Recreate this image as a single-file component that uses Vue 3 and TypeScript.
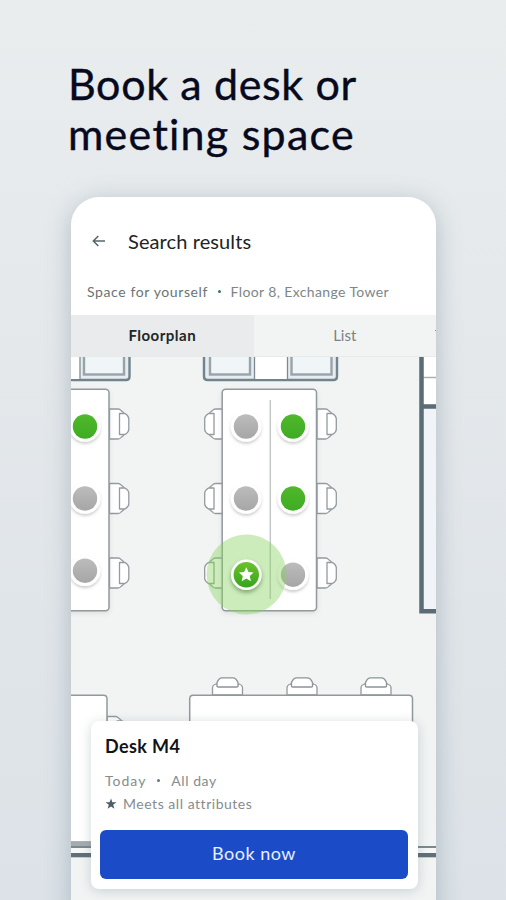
<script setup lang="ts">
interface Spot {
  x: number
  y: number
  free: boolean
}

const clusters: number[] = [-207.5, 0]
const chairRows: number[] = [424, 498.5, 573]
const topChairs: number[] = [227.5, 302, 376]

const spots: Spot[] = [
  { x: 85, y: 426.5, free: true },
  { x: 85, y: 498.5, free: false },
  { x: 85, y: 570.7, free: false },
  { x: 246, y: 426.5, free: false },
  { x: 293, y: 426.5, free: true },
  { x: 246, y: 498.5, free: false },
  { x: 293, y: 498.5, free: true },
  { x: 293, y: 574.7, free: false },
]
</script>

<template>
  <main class="page">
    <h1 class="headline">
      <span class="line line-a">Book a desk or</span>
      <span class="line line-b">meeting space</span>
    </h1>

    <section class="phone">
      <header class="top">
        <div class="title-row">
          <svg class="back" viewBox="0 0 14 12" width="14" height="12">
            <path d="M6.3 1 1.3 6l5 5M1.5 6h11.500" fill="none" stroke="#56666b" stroke-width="1.5" />
          </svg>
          <h2 class="title">Search results</h2>
        </div>
        <p class="crumbs">
          <span class="who">Space for yourself</span>
          <i class="dot"></i>
          <span class="where">Floor 8, Exchange Tower</span>
        </p>
      </header>

      <nav class="tabs">
        <button class="tab active"><span>Floorplan</span></button>
        <button class="tab"><span>List</span></button>
        <i class="next-tab"></i>
      </nav>

      <div class="floor">
        <svg class="map" viewBox="71 357 365 543" width="365" height="543">
          <defs>
            <linearGradient id="free" x1="0" y1="0" x2="0" y2="1">
              <stop offset="0" stop-color="#50b82c" />
              <stop offset="1" stop-color="#3eac22" />
            </linearGradient>
            <linearGradient id="picked" x1="0" y1="0" x2="0" y2="1">
              <stop offset="0" stop-color="#6cc22c" />
              <stop offset="1" stop-color="#35a51c" />
            </linearGradient>
            <linearGradient id="taken" x1="0" y1="0" x2="0" y2="1">
              <stop offset="0" stop-color="#bcbcbc" />
              <stop offset="1" stop-color="#a6a6a6" />
            </linearGradient>
            <filter id="lift" x="-40%" y="-40%" width="180%" height="190%">
              <feDropShadow dx="0" dy="2" stdDeviation="1.8" flood-color="#000" flood-opacity="0.2" />
            </filter>
            <filter id="picked-lift" x="-40%" y="-40%" width="180%" height="190%">
              <feDropShadow dx="0" dy="2.500" stdDeviation="2" flood-color="#123c08" flood-opacity="0.42" />
            </filter>
            <filter id="soft" x="-10%" y="-10%" width="120%" height="120%">
              <feDropShadow dx="0" dy="2" stdDeviation="2" flood-color="#4c5c60" flood-opacity="0.14" />
            </filter>
            <g id="chair">
              <path d="M0-15H8.500Q10.500-15 11.500-13.500L14-11.5V11.5L11.500 13.500Q10.500 15 8.500 15H0Z" fill="#fff" stroke="#939b9f" stroke-width="1.3" stroke-linejoin="round" />
              <path d="M10-10.5H15.5Q19.3-8 19.3-5.500V5.500Q19.3 8 15.500 10.500H10Z" fill="#fff" stroke="#939b9f" stroke-width="1.3" stroke-linejoin="round" />
            </g>
            <g id="top-chair">
              <path d="M-15 0V-7Q-15-10-11.500-11H11.500Q15-10 15-7V0Z" fill="#fff" stroke="#939b9f" stroke-width="1.3" />
              <path d="M-10.500-8.500V-12.500Q-8.500-17.200-5.500-17.200H5.500Q8.500-17.200 10.500-12.500V-8.500Q10-8 9-8H-9Q-10-8-10.500-8.500Z" fill="#fff" stroke="#8b9498" stroke-width="1.3" stroke-linejoin="round" />
            </g>
          </defs>

          <g v-for="dx in clusters" :key="dx" :transform="`translate(${dx} 0)`">
            <path d="M204 350V376.500Q204 380 207.500 380H333.500Q337 380 337 376.500V350Z" fill="#e6ecef" stroke="#71848e" stroke-width="2.400" />
            <rect x="254" y="350" width="34" height="29" fill="#fff" />
            <g fill="#f0f5f8" stroke="#98a4aa" stroke-width="2.400">
              <rect x="210" y="345" width="40" height="29.500" />
              <rect x="291.500" y="345" width="40" height="29.500" />
            </g>
            <path d="M254.500 350V379M287.500 350V379" stroke="#7c8b93" stroke-width="1.300" />
            <g v-for="y in chairRows" :key="y">
              <use href="#chair" :transform="`translate(317 ${y})`" />
              <use href="#chair" :transform="`translate(224 ${y}) scale(-1 1)`" />
            </g>
            <rect x="222.200" y="389.300" width="94.300" height="221.500" rx="3.500" fill="#fff" stroke="#92999d" stroke-width="1.500" filter="url(#soft)" />
            <path d="M270.300 400V599" stroke="#c3c7c9" stroke-width="1.500" />
          </g>

          <rect x="422" y="357" width="14" height="47" fill="#fff" />
          <rect x="422" y="407" width="14" height="204" fill="#f0f4f8" />
          <path d="M423 377.500H436" stroke="#b0aeae" stroke-width="1.500" />
          <path d="M421.500 357V613.500M423 406.500H436M421 611.300H436" fill="none" stroke="#5a6c76" stroke-width="4.500" />

          <use href="#chair" transform="translate(107 731.500)" />
          <path d="M60 695.200H103.500Q107 695.200 107 698.700V842H60Z" fill="#fff" stroke="#92999d" stroke-width="1.500" />
          <use v-for="x in topChairs" :key="x" href="#top-chair" :transform="`translate(${x} 695)`" />
          <path d="M189.700 842V698.700Q189.700 695.200 193.200 695.200H409Q412.500 695.200 412.500 698.700V842Z" fill="#fff" stroke="#92999d" stroke-width="1.500" />
          <rect x="71" y="842" width="40" height="6" fill="#a3adb0" />
          <rect x="71" y="846" width="365" height="2" fill="#7b898e" />
          <rect x="71" y="848" width="365" height="5" fill="#f5f8f8" />
          <rect x="71" y="853" width="365" height="4.300" fill="#5f7078" />

          <g v-for="(s, i) in spots" :key="i" :transform="`translate(${s.x} ${s.y})`">
            <circle r="15.300" fill="#fff" filter="url(#lift)" />
            <circle r="12.200" :fill="s.free ? 'url(#free)' : 'url(#taken)'" />
          </g>

          <circle cx="246.500" cy="574.500" r="40" fill="#86d45e" fill-opacity="0.42" />
          <g transform="translate(246.300 574.700)">
            <circle r="15.300" fill="#fff" filter="url(#picked-lift)" />
            <circle r="12.700" fill="url(#picked)" />
            <path d="M0-7.500 2.200-2.700 7.300-2.200 3.500 1.300 4.600 6.500 0 3.800-4.600 6.500-3.500 1.300-7.300-2.200-2.200-2.700Z" fill="#fff" />
          </g>
        </svg>

        <article class="card">
          <h3 class="desk">Desk M4</h3>
          <p class="meta"><span class="today">Today</span><i class="dot grey"></i><span class="allday">All day</span></p>
          <p class="meta attrs">
            <svg class="star" viewBox="-6 -6 12 12" width="12" height="12">
              <path d="M0-5.600 1.400-1.800 5.500-1.700 2.200.8 3.400 4.800 0 2.400-3.400 4.800-2.200.8-5.500-1.700-1.400-1.800Z" fill="#4e5e66" />
            </svg>
            <span class="meets">Meets all attributes</span>
          </p>
          <button class="book"><span>Book now</span></button>
        </article>
      </div>
    </section>
  </main>
</template>

<style>
body {
  margin: 0;
}
</style>

<style scoped>
.page {
  box-sizing: border-box;
  width: 506px;
  height: 900px;
  overflow: hidden;
  padding: 59px 70px 0 71px;
  background: linear-gradient(180deg, #e9edee 0%, #e4e8eb 40%, #dce2e7 100%);
  font-family: Lato, "Noto Sans", sans-serif;
}
h1, h2, h3, p {
  margin: 0;
  font-weight: 400;
}
button {
  border: 0;
  padding: 0;
  font-family: inherit;
}
.headline {
  height: 138px;
  margin-left: -3px;
  color: #07091d;
  font-size: 43px;
  line-height: 50px;
  -webkit-text-stroke: 0.4px #07091d;
}
.line {
  display: block;
  white-space: nowrap;
}
.line-a { letter-spacing: 0.64px; }
.line-b { letter-spacing: 1.25px; }
.phone {
  width: 365px;
  height: 720px;
  overflow: hidden;
  border-radius: 28px 28px 0 0;
  background: #fff;
  box-shadow: 0 5px 24px rgba(86, 112, 128, 0.36);
}
.top {
  box-sizing: border-box;
  height: 118px;
  padding: 30px 16px 0;
}
.title-row {
  display: flex;
  align-items: center;
  height: 28px;
  padding-left: 5px;
}
.back {
  margin-right: 22px;
}
.title {
  color: #202426;
  font-size: 20px;
  letter-spacing: 0.1px;
  line-height: 28px;
  white-space: nowrap;
}
.crumbs {
  display: flex;
  align-items: center;
  height: 20px;
  margin-top: 26px;
  color: #7d8689;
  font-size: 14px;
  white-space: nowrap;
}
.who {
  color: #697477;
  letter-spacing: 0.62px;
}
.where { letter-spacing: 0.38px; }
.dot {
  width: 3px;
  height: 3px;
  margin: 0 10px 0 9.5px;
  border-radius: 50%;
  background: #397568;
}
.tabs {
  display: flex;
  align-items: stretch;
  box-sizing: border-box;
  height: 42px;
  border-bottom: 1px solid #e6eaea;
  background: #f2f4f4;
}
.tab {
  width: 182.5px;
  padding-bottom: 1px;
  background: #f2f4f4;
  color: #7b8184;
  font-size: 15px;
}
.tab.active {
  background: #e9ebec;
  color: #22272a;
  font-weight: 700;
  letter-spacing: 0.5px;
}
.next-tab {
  width: 1px;
  height: 1px;
  margin: 15px 0 0 -1px;
  background: #8b9497;
}
.floor {
  position: relative;
  height: 543px;
  background: #f2f4f4;
}
.map {
  display: block;
}
.card {
  position: absolute;
  top: 364px;
  left: 20px;
  box-sizing: border-box;
  width: 327px;
  height: 168px;
  padding: 12px 10px 10px;
  border-radius: 8px;
  background: #fff;
  box-shadow: 0 2px 12px rgba(70, 90, 98, 0.24);
}
.desk {
  height: 26px;
  padding-left: 4px;
  color: #101416;
  font-size: 18px;
  font-weight: 700;
  letter-spacing: 0.4px;
  line-height: 26px;
}
.meta {
  display: flex;
  align-items: center;
  height: 23px;
  padding-left: 4px;
  color: #858c90;
  font-size: 14px;
  white-space: nowrap;
}
.desk + .meta {
  margin-top: 10px;
}
.today { letter-spacing: 1px; }
.allday { letter-spacing: 0.55px; }
.meets { letter-spacing: 0.53px; }
.dot.grey {
  margin: 0 11px;
  background: #68777b;
}
.star {
  margin-right: 6px;
}
.book {
  display: block;
  width: 308px;
  height: 49px;
  margin: 15px 0 0 -1px;
  padding-bottom: 4px;
  border-radius: 6px;
  background: #1b4bc7;
  color: #e9efff;
  font-size: 18px;
  letter-spacing: 0.5px;
}
</style>
